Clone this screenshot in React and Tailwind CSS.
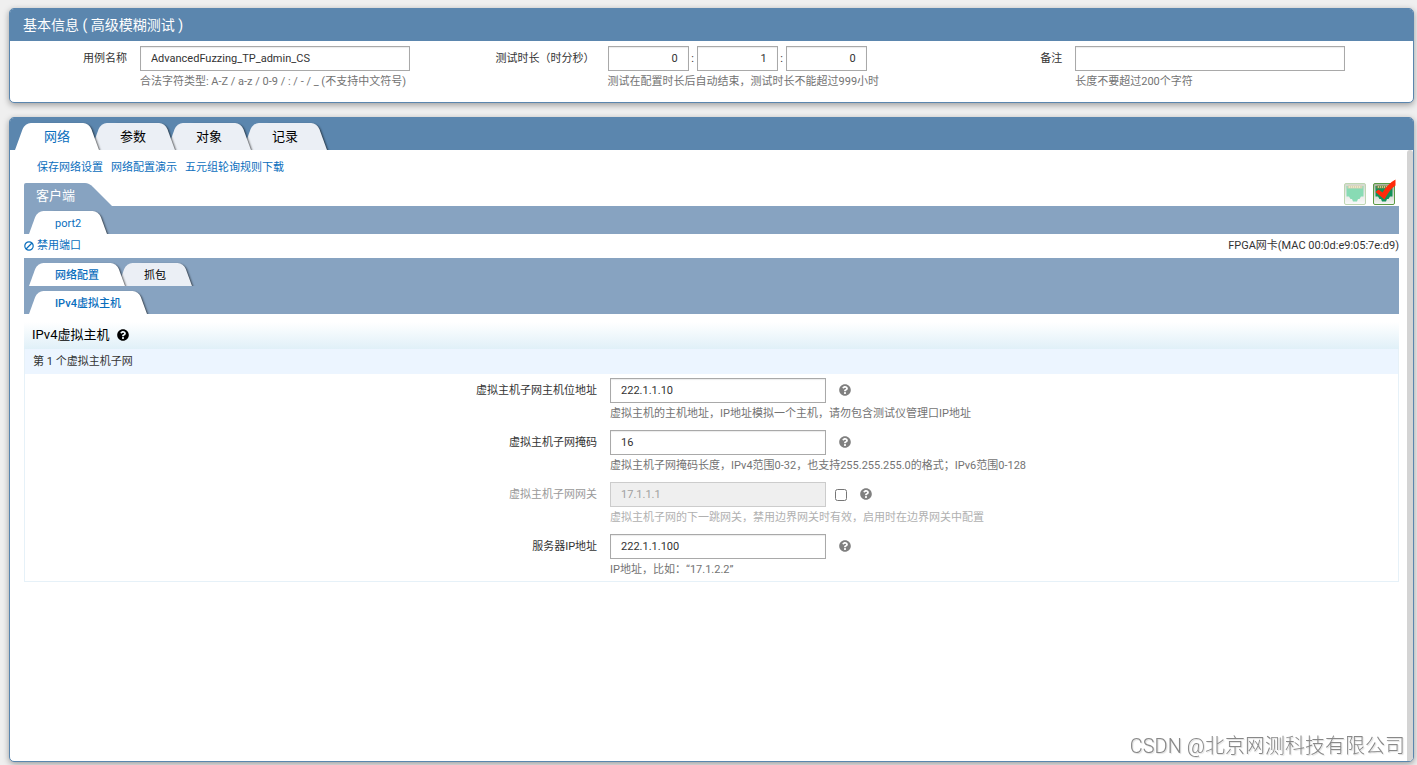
import React from 'react';
import { FaQuestionCircle } from 'react-icons/fa';

const inputClass =
  'h-[25px] border border-[#a9a9a9] bg-white px-[10px] text-[11px] text-[#333] shadow-[inset_0_1px_1px_rgba(0,0,0,0.08)] outline-none disabled:border-[#ccc] disabled:bg-[#efefef] disabled:text-[#a0a0a0] disabled:shadow-none';

const mainTabs = ['网络', '参数', '对象', '记录'];

const subnetFields = [
  {
    id: 'host',
    label: '虚拟主机子网主机位地址',
    value: '222.1.1.10',
    hint: '虚拟主机的主机地址，IP地址模拟一个主机，请勿包含测试仪管理口IP地址',
  },
  {
    id: 'mask',
    label: '虚拟主机子网掩码',
    value: '16',
    hint: '虚拟主机子网掩码长度，IPv4范围0-32，也支持255.255.255.0的格式；IPv6范围0-128',
  },
  {
    id: 'gateway',
    label: '虚拟主机子网网关',
    value: '17.1.1.1',
    hint: '虚拟主机子网的下一跳网关，禁用边界网关时有效，启用时在边界网关中配置',
    disabled: true,
  },
  {
    id: 'server',
    label: '服务器IP地址',
    value: '222.1.1.100',
    hint: 'IP地址，比如：“17.1.2.2”',
  },
];

// Trapezoid tab: two skewed halves with rounded outer corners
const Tab = ({ active, large, bold, className = '', children }) => (
  <button
    type="button"
    className={`relative isolate whitespace-nowrap ${
      large ? 'h-[27px] px-[29px] text-[13px]' : 'h-[23px] px-[26px] pt-[2px] text-[11px]'
    } ${active ? 'text-[#0a6ebd]' : 'text-black'} ${bold ? 'font-medium' : ''} ${className}`}
  >
    <span
      className={`absolute inset-y-0 right-0 -z-10 w-3/5 origin-bottom-right skew-x-[20deg] rounded-tr-[6px] shadow-[1px_1px_2px_rgba(0,0,0,0.6)] ${
        active ? 'bg-white' : 'bg-[#ebeff5]'
      }`}
    />
    <span
      className={`absolute inset-y-0 left-0 -z-10 w-3/5 origin-bottom-left -skew-x-[20deg] rounded-tl-[6px] ${
        active ? 'bg-white' : 'bg-[#ebeff5]'
      }`}
    />
    {children}
  </button>
);

const PortIcon = ({ checked }) => (
  <svg width="24" height="27" viewBox="0 0 24 27" className={checked ? '' : 'opacity-50'}>
    <defs>
      <linearGradient id="portFrame" x1="0" y1="0" x2="0" y2="1">
        <stop offset="0" stopColor="#a9b39f" />
        <stop offset="1" stopColor="#f6f6f6" />
      </linearGradient>
    </defs>
    <rect x="0.5" y="4.5" width="21" height="21" rx="1.5" fill="url(#portFrame)" stroke={checked ? '#5b9a45' : '#7fae68'} />
    <path d="M2.500 7h17v10.500h-2.500l-1.500 2.500h-1.500l-1 2.500H9L8 20H6.500L5 17.500H2.500z" fill={checked ? '#11925a' : '#14b96c'} />
    <path d="M3.500 6.500h15v3h-15z" fill={checked ? '#7c8a4c' : '#b0a86e'} />
    <path d="M5 8h12" stroke="#e8d79a" strokeWidth="1.500" strokeDasharray="1 1" />
    {checked && <path d="M2.500 13l3-2.500 4 3C12.500 8.500 17 3.500 22.500 0.500v6C18 9.500 14.500 14.500 11.500 20.500z" fill="#ff2a0a" />}
  </svg>
);

const BanIcon = () => (
  <svg width="10" height="10" viewBox="0 0 10 10" fill="none" stroke="currentColor" strokeWidth="1.200">
    <circle cx="5" cy="5" r="4.200" />
    <path d="M2 8l6-6" />
  </svg>
);

const BasicInfo = () => (
  <section className="overflow-hidden rounded-[5px] border border-[#5b86ae] bg-white shadow-[0_2px_6px_rgba(0,0,0,0.35)]">
    <h1 className="flex h-8 items-center bg-[#5b86ae] px-[13px] text-[14px] text-white">
      基本信息 ( 高级模糊测试 )
    </h1>
    <div className="grid grid-cols-3 pt-[5px] pb-[9px]">
      <div className="flex gap-[13px]">
        <label htmlFor="caseName" className="w-1/4 shrink-0 text-right leading-[26px]">用例名称</label>
        <div>
          <input id="caseName" className={`${inputClass} w-[270px]`} defaultValue="AdvancedFuzzing_TP_admin_CS" />
          <p className="leading-[22px] text-[#737373]">合法字符类型: A-Z / a-z / 0-9 / : / - / _ (不支持中文符号)</p>
        </div>
      </div>
      <div className="flex gap-[13px]">
        <label htmlFor="hours" className="w-1/4 shrink-0 whitespace-nowrap text-right leading-[26px]">测试时长（时分秒）</label>
        <div>
          <div className="flex items-center">
            <input id="hours" className={`${inputClass} w-[81px] text-right`} defaultValue="0" />
            <span className="w-2 text-center">:</span>
            <input aria-label="分" className={`${inputClass} w-[81px] text-right`} defaultValue="1" />
            <span className="w-2 text-center">:</span>
            <input aria-label="秒" className={`${inputClass} w-[81px] text-right`} defaultValue="0" />
          </div>
          <p className="leading-[22px] text-[#737373]">测试在配置时长后自动结束，测试时长不能超过999小时</p>
        </div>
      </div>
      <div className="flex gap-[13px]">
        <label htmlFor="remark" className="w-1/4 shrink-0 text-right leading-[26px]">备注</label>
        <div>
          <input id="remark" className={`${inputClass} w-[270px]`} />
          <p className="leading-[22px] text-[#737373]">长度不要超过200个字符</p>
        </div>
      </div>
    </div>
  </section>
);

const SubnetField = ({ id, label, value, hint, disabled }) => (
  <div className="flex gap-[13px]">
    <label htmlFor={id} className={`w-5/12 shrink-0 text-right leading-[26px] ${disabled ? 'text-[#999]' : ''}`}>
      {label}
    </label>
    <div>
      <div className="flex items-center">
        <input id={id} className={`${inputClass} w-[216px]`} defaultValue={value} disabled={disabled} />
        {disabled && <input type="checkbox" aria-label={label} className="ml-[9px] h-3 w-3" />}
        <FaQuestionCircle className="mb-[2px] ml-[13px] h-3 w-3 text-[#808080]" />
      </div>
      <p className={`leading-[22px] ${disabled ? 'text-[#b0b0b0]' : 'text-[#737373]'}`}>{hint}</p>
    </div>
  </div>
);

const NetworkPanel = () => (
  <div className="min-w-0 flex-1 pl-[14px] pr-2">
    <nav className="flex h-[33px] items-center gap-2 pt-[2px] pl-[13px] text-[#0a6ebd]">
      <a href="#save">保存网络设置</a>
      <a href="#demo">网络配置演示</a>
      <a href="#rules">五元组轮询规则下载</a>
    </nav>

    <div className="flex h-[23px] items-end justify-between">
      <h2 className="relative isolate flex h-[23px] items-center pl-3 pr-9 pt-[2px] text-[13px] text-white">
        <span className="absolute inset-y-0 left-0 -z-10 w-1/2 rounded-tl-[2px] bg-[#87a3c1]" />
        <span className="absolute inset-y-0 right-0 -z-10 w-1/2 origin-bottom-right skew-x-[45deg] rounded-tr-[4px] bg-[#87a3c1]" />
        客户端
      </h2>
      <div className="flex gap-[5px] pr-[2px]">
        <PortIcon />
        <PortIcon checked />
      </div>
    </div>

    <div className="flex h-7 items-end overflow-hidden bg-[#87a3c1] pl-[5px]">
      <Tab active>port2</Tab>
    </div>
    <div className="flex h-6 items-center justify-between">
      <button type="button" className="flex items-center gap-[3px] text-[#0a6ebd]">
        <BanIcon />
        禁用端口
      </button>
      <span>FPGA网卡(MAC 00:0d:e9:05:7e:d9)</span>
    </div>
    <div className="flex h-7 items-end overflow-hidden bg-[#87a3c1] pl-[5px]">
      <Tab active bold className="z-10">网络配置</Tab>
      <Tab className="-ml-[7px]">抓包</Tab>
    </div>
    <div className="flex h-7 items-end overflow-hidden bg-[#87a3c1] pl-[5px]">
      <Tab active bold>IPv4虚拟主机</Tab>
    </div>

    <h3 className="mt-2 flex h-[27px] items-center gap-2 bg-gradient-to-b from-white to-[#e0f0f8] pb-[2px] pl-2 text-[13px] text-black">
      IPv4虚拟主机
      <FaQuestionCircle className="h-3 w-3" />
    </h3>
    <div className="border border-t-0 border-[#e6f1f8]">
      <h4 className="flex h-[25px] items-center bg-[#ecf5ff] pl-2">第 1 个虚拟主机子网</h4>
      <div className="flex flex-col gap-[5px] pt-1">
        {subnetFields.map((field) => (
          <SubnetField key={field.id} {...field} />
        ))}
      </div>
    </div>
  </div>
);

const App = () => {
  return (
    <div className="flex min-h-screen flex-col gap-[14px] bg-[#efefef] pt-2 pr-[3px] pb-[3px] pl-[9px] font-[Roboto,'Noto_Sans_CJK_SC',sans-serif] text-[11px] leading-4 text-[#333]">
      <BasicInfo />

      <main className="flex flex-1 flex-col overflow-hidden rounded-[5px] border border-[#5b86ae] bg-white shadow-[0_2px_6px_rgba(0,0,0,0.35)]">
        <div className="flex h-8 shrink-0 items-end overflow-hidden bg-[#5b86ae] pl-[5px]">
          {mainTabs.map((name, i) => (
            <Tab
              key={name}
              large
              active={i === 0}
              className={['z-40', 'z-30 -ml-2', 'z-20 -ml-2', 'z-10 -ml-2'][i]}
            >
              {name}
            </Tab>
          ))}
        </div>
        <div className="flex flex-1">
          <NetworkPanel />
          <div className="w-[6px] shrink-0 rounded-t-[3px] bg-[#d4d4d4]" />
        </div>
      </main>

      <div className="pointer-events-none fixed right-3 bottom-[3px] text-[20px] leading-8 font-light text-[#888] [text-shadow:1px_1px_1px_#ddd]">
        CSDN @北京网测科技有限公司
      </div>
    </div>
  );
};

export default App;
